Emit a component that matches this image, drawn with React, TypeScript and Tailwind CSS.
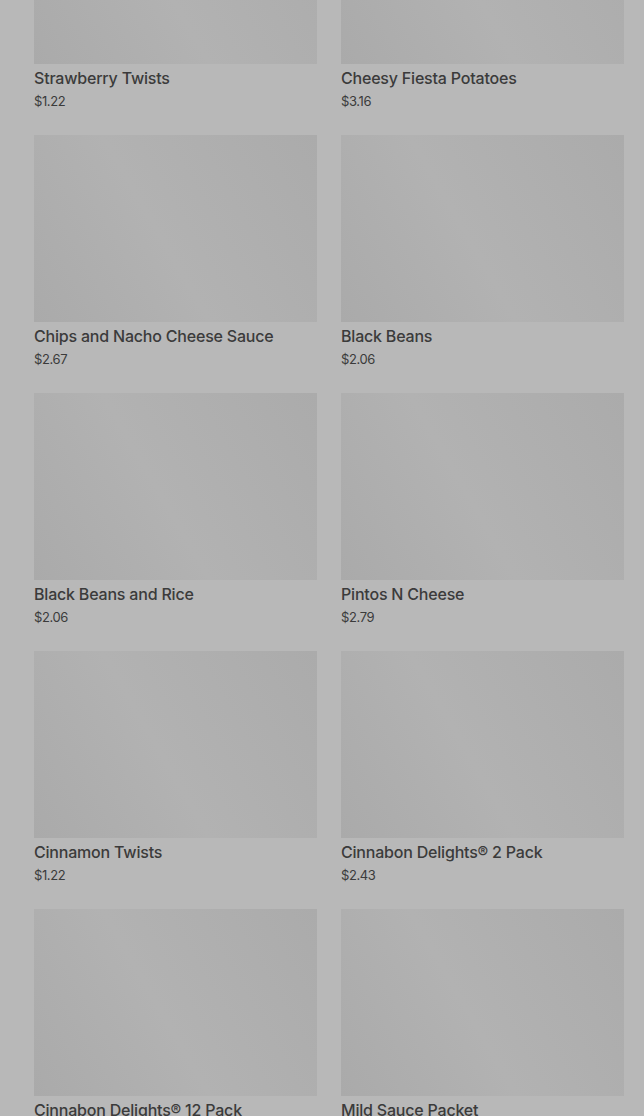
import React from "react";

const items = [
  { name: "Strawberry Twists", price: "$1.22" },
  { name: "Cheesy Fiesta Potatoes", price: "$3.16" },
  { name: "Chips and Nacho Cheese Sauce", price: "$2.67" },
  { name: "Black Beans", price: "$2.06" },
  { name: "Black Beans and Rice", price: "$2.06" },
  { name: "Pintos N Cheese", price: "$2.79" },
  { name: "Cinnamon Twists", price: "$1.22" },
  { name: "Cinnabon Delights® 2 Pack", price: "$2.43" },
  { name: "Cinnabon Delights® 12 Pack", price: "$4.86" },
  { name: "Mild Sauce Packet", price: "$0.00" },
];

export default function App() {
  return (
    <div
      className="h-[1116px] w-full overflow-hidden bg-[#b8b8b8] text-[#3b3b3b]"
      style={{ fontFamily: "Inter, 'Noto Sans', sans-serif" }}
    >
      <div className="mt-[-123px] grid grid-cols-2 gap-x-6 pl-[34px] pr-[20px]">
        {items.map((it, i) => (
          <div key={i} className="flex flex-col pb-[26px]">
            <div className="h-[187px] w-full bg-[linear-gradient(60deg,#aaaaaa_0%,#b2b2b2_45%,#ababab_100%)]" />
            <div className="mt-[2px] text-[16px] font-medium leading-[24px] tracking-[-0.2px]">
              {it.name}
            </div>
            <div className="mt-[3px] text-[13px] leading-[16px] tracking-[-0.4px]">
              {it.price}
            </div>
          </div>
        ))}
      </div>
    </div>
  );
}
